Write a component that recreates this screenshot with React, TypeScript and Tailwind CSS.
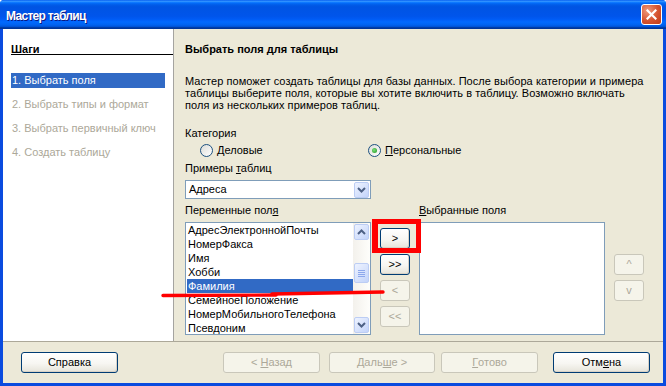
import React from 'react'

function Chevron({ up = false }: { up?: boolean }) {
  return (
    <svg width="9" height="6" viewBox="0 0 9 6">
      <path
        d={up ? 'M1 5 L4.5 1.5 L8 5' : 'M1 1 L4.5 4.5 L8 1'}
        fill="none"
        stroke="#4D6185"
        strokeWidth="2"
      />
    </svg>
  )
}

function XpButton({
  children,
  disabled,
  className = ''
}: {
  children: React.ReactNode
  disabled?: boolean
  className?: string
}) {
  return (
    <div
      className={
        'flex h-[21px] shrink-0 items-center justify-center rounded-[3px] border ' +
        (disabled
          ? 'border-[#C9C7BA] bg-[#F5F4EA] text-[#ACA899] '
          : 'border-[#003C74] bg-[linear-gradient(180deg,#FFFFFF_0%,#F7F6F2_55%,#E6E4DA_100%)] text-black shadow-[inset_-1px_-1px_0_#D8D2C6] ') +
        className
      }
    >
      {children}
    </div>
  )
}

function Radio({ checked, label }: { checked?: boolean; label: React.ReactNode }) {
  return (
    <div className="flex h-[13px] items-center">
      <span className="flex h-[13px] w-[13px] items-center justify-center rounded-full border border-[#1C5180] bg-[linear-gradient(135deg,#DCDCD7,#FFFFFF)]">
        {checked && (
          <span className="h-[5px] w-[5px] rounded-full bg-[radial-gradient(circle_at_40%_40%,#7BE07B,#1E931E)]" />
        )}
      </span>
      <span className="ml-[4px] leading-[13px]">{label}</span>
    </div>
  )
}

const steps = [
  '1. Выбрать поля',
  '2. Выбрать типы и формат',
  '3. Выбрать первичный ключ',
  '4. Создать таблицу'
]

const fields = [
  'АдресЭлектроннойПочты',
  'НомерФакса',
  'Имя',
  'Хобби',
  'Фамилия',
  'СемейноеПоложение',
  'НомерМобильногоТелефона',
  'Псевдоним'
]

const scrollBtn =
  'mx-[1px] flex h-[16px] w-[15px] items-center justify-center rounded-[2px] border border-[#BCCDF4] bg-[linear-gradient(135deg,#EEF3FF,#C3D4FA)]'

export default function App() {
  return (
    <div className="relative flex h-[386px] w-[666px] flex-col overflow-hidden rounded-t-[4px] bg-[#0A4BDF] font-['Liberation_Sans',Arial,sans-serif] text-[11px] text-black">
      {/* title bar */}
      <div className="flex h-[29px] shrink-0 items-center bg-[linear-gradient(180deg,#0058EE_0%,#3593FF_4%,#288EFF_6%,#127DFF_8%,#036FFC_10%,#0262EE_14%,#0057E5_20%,#0054E3_24%,#0055EB_56%,#005BF5_66%,#026AFE_76%,#0062EF_86%,#0052D6_92%,#0040AB_94%,#003092_100%)] pl-[6px] pr-[4px]">
        <span className="pt-[2px] text-[12px] font-bold tracking-[-0.7px] text-white [text-shadow:1px_1px_0_#0A1883]">
          Мастер таблиц
        </span>
        <div className="ml-auto flex h-[21px] w-[21px] items-center justify-center rounded-[3px] border border-white bg-[radial-gradient(circle_at_30%_30%,#F09A7C,#D5532F_55%,#C03A16)]">
          <svg width="11" height="11" viewBox="0 0 11 11">
            <path d="M1.5 1.5 L9.5 9.5 M9.5 1.5 L1.5 9.5" stroke="white" strokeWidth="2.2" strokeLinecap="square" />
          </svg>
        </div>
      </div>

      {/* body */}
      <div className="mx-[3px] mb-[3px] flex flex-1 flex-col bg-[#ECE9D8]">
        <div className="flex h-[312px] shrink-0">
          {/* steps */}
          <div className="w-[171px] shrink-0 border-r border-[#A5A4A0] bg-white pl-[8px]">
            <div className="mt-[14px] h-[12px] border-b border-black font-bold leading-[12px]">
              Шаги
            </div>
            <div className="mt-[18px] flex flex-col gap-[9px] pr-[8px]">
              {steps.map((s, i) => (
                <div
                  key={s}
                  className={
                    'h-[15px] pl-[1px] leading-[15px] whitespace-nowrap ' +
                    (i === 0 ? 'bg-[#316AC5] text-white' : 'text-[#ACA899]')
                  }
                >
                  {s}
                </div>
              ))}
            </div>
          </div>

          {/* page */}
          <div className="flex flex-1 flex-col pl-[11px]">
            <div className="mt-[14px] h-[13px] font-bold leading-[13px]">Выбрать поля для таблицы</div>
            <div className="mt-[19px] leading-[12px] tracking-[0.05px] whitespace-nowrap">
              Мастер поможет создать таблицы для базы данных. После выбора категории и примера
              <br />
              таблицы выберите поля, которые вы хотите включить в таблицу. Возможно включать
              <br />
              поля из нескольких примеров таблиц.
            </div>
            <div className="mt-[16px] h-[13px] leading-[13px]">Категория</div>
            <div className="mt-[4px] flex">
              <div className="w-[183px] pl-[15px]">
                <Radio label={<><span className="underline">Д</span>еловые</>} />
              </div>
              <Radio checked label={<><span className="underline">П</span>ерсональные</>} />
            </div>
            <div className="mt-[5px] h-[13px] leading-[13px]">
              Примеры <span className="underline">т</span>аблиц
            </div>
            <div className="mt-[5px] flex h-[19px] w-[186px] items-center border border-[#7F9DB9] bg-white pl-[3px]">
              <span className="flex-1">Адреса</span>
              <div className={scrollBtn + ' h-[15px]'}>
                <Chevron />
              </div>
            </div>
            <div className="mt-[5px] flex h-[13px] leading-[13px]">
              <div className="w-[234px]">
                Переменные пол<span className="underline">я</span>
              </div>
              <div>
                <span className="underline">В</span>ыбранные поля
              </div>
            </div>

            <div className="mt-[5px] flex items-start">
              {/* available fields */}
              <div className="flex h-[113px] w-[186px] border border-[#7F9DB9] bg-white">
                <div className="flex-1 pl-[1px]">
                  {fields.map((f, i) => (
                    <div
                      key={f}
                      className={
                        'h-[14px] pl-[1px] leading-[14px] whitespace-nowrap ' +
                        (i === 4 ? 'bg-[#316AC5] text-white' : '')
                      }
                    >
                      {f}
                    </div>
                  ))}
                </div>
                <div className="flex w-[17px] flex-col bg-[linear-gradient(90deg,#F3F1EC,#FEFEFB)]">
                  <div className={scrollBtn + ' mt-[1px]'}>
                    <Chevron up />
                  </div>
                  <div className={scrollBtn + ' mt-[23px] h-[20px] flex-col gap-[1px]'}>
                    <span className="h-[1px] w-[7px] bg-[#8DA8EC]" />
                    <span className="h-[1px] w-[7px] bg-[#8DA8EC]" />
                    <span className="h-[1px] w-[7px] bg-[#8DA8EC]" />
                    <span className="h-[1px] w-[7px] bg-[#8DA8EC]" />
                  </div>
                  <div className={scrollBtn + ' mt-auto mb-[1px]'}>
                    <Chevron />
                  </div>
                </div>
              </div>

              {/* move buttons */}
              <div className="ml-[9px] mt-[6px] flex w-[30px] flex-col gap-[5px]">
                <XpButton className="text-[11px]">&gt;</XpButton>
                <XpButton>&gt;&gt;</XpButton>
                <XpButton disabled>&lt;</XpButton>
                <XpButton disabled>&lt;&lt;</XpButton>
              </div>

              {/* selected fields */}
              <div className="ml-[9px] h-[113px] w-[186px] border border-[#7F9DB9] bg-white" />

              <div className="ml-[9px] mt-[32px] flex w-[30px] flex-col gap-[5px]">
                <XpButton disabled>^</XpButton>
                <XpButton disabled>v</XpButton>
              </div>
            </div>
          </div>
        </div>

        {/* footer */}
        <div className="flex flex-1 items-start border-t border-[#ACA899] pt-[10px]">
          <XpButton className="ml-[18px] w-[97px]">Справка</XpButton>
          <XpButton disabled className="ml-[105px] w-[97px]">
            &lt; <span className="ml-[3px] underline">Н</span>азад
          </XpButton>
          <XpButton disabled className="ml-[9px] w-[106px]">
            Даль<span className="underline">ш</span>е &gt;
          </XpButton>
          <XpButton disabled className="ml-[6px] w-[97px]">
            <span className="underline">Г</span>отово
          </XpButton>
          <XpButton className="ml-[15px] w-[97px]">
            Отм<span className="underline">е</span>на
          </XpButton>
        </div>
      </div>

      {/* red annotation overlay */}
      <div className="pointer-events-none absolute left-[372px] top-[219px] h-[34px] w-[49px] border-[5px] border-l-[6px] border-[#FF0000]" />
      <svg className="pointer-events-none absolute left-0 top-0" width="666" height="386">
        <path d="M163 295.5 L276 295" stroke="#FF0000" strokeWidth="3.4" strokeLinecap="round" fill="none" />
        <path d="M272 294 L383 292" stroke="#FF0000" strokeWidth="3.4" strokeLinecap="round" fill="none" />
      </svg>
    </div>
  )
}
